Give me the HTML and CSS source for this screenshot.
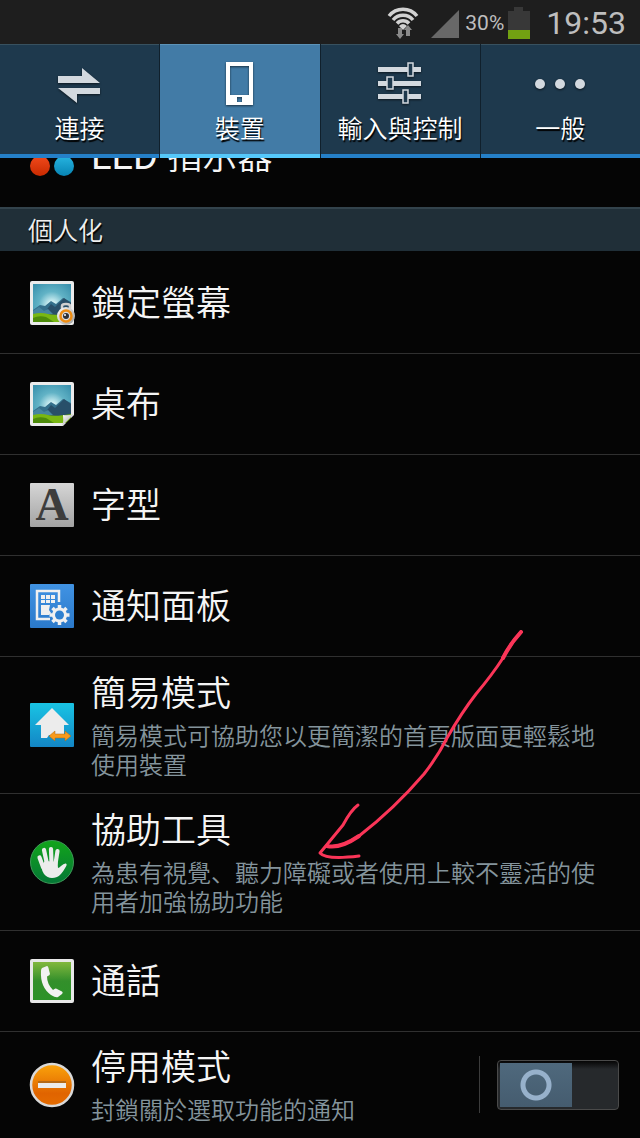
FILE: index.html
```html
<!DOCTYPE html>
<html lang="zh">
<head>
    <title>設定</title>
    <meta charset="UTF-8">
    <meta name="viewport" content="width=device-width, initial-scale=1">
    <link rel="stylesheet" href="styles.css">
</head>
<body>
    <header class="status-bar">
        <svg class="wifi" width="32" height="34" viewBox="0 0 32 34" aria-hidden="true">
            <g fill="none" stroke="#d2d2d2" stroke-width="3.500">
                <path d="M2 10A18 18 0 0 1 30 10"/>
                <path d="M6 14A13 13 0 0 1 26 14"/>
                <path d="M10 17.500A8 8 0 0 1 22 17.500"/>
            </g>
            <path d="M12 20Q16 16 20 20L16 24z" fill="#d2d2d2"/>
            <path d="M11 22h4v6h2l-4 5-4-5h2z" fill="#8a8a8a"/>
            <path d="M19 30h4v-6h2l-4-5-4 5h2z" fill="#8a8a8a"/>
        </svg>
        <svg class="signal" width="28" height="28" viewBox="0 0 28 28" aria-hidden="true">
            <path d="M28 0v28H0z" fill="#686868"/>
        </svg>
        <span class="percent">30%</span>
        <svg class="battery" width="22" height="32" viewBox="0 0 22 32" aria-hidden="true">
            <path d="M6 0h9v4h7v28H0V4h6z" fill="#383838"/>
            <path d="M0 23h22v9H0z" fill="#72a112"/>
        </svg>
        <span class="clock">19:53</span>
    </header>

    <nav class="tabs" role="tablist">
        <button class="tab" role="tab" aria-selected="false">
            <svg width="48" height="48" viewBox="0 0 48 48" aria-hidden="true">
                <path d="M2 16h24V8l18 15H2z" fill="#d3d9df"/>
                <path d="M44 34H21v9L2 28h42z" fill="#d3d9df"/>
            </svg>
            <span>連接</span>
        </button>
        <button class="tab active" role="tab" aria-selected="true">
            <svg width="48" height="48" viewBox="0 0 48 48" aria-hidden="true">
                <path fill-rule="evenodd" d="M10 2h27v43H10zM14 6v29h19V6zM21 37v5h5v-5z" fill="#fff"/>
            </svg>
            <span>裝置</span>
        </button>
        <button class="tab" role="tab" aria-selected="false">
            <svg width="48" height="48" viewBox="0 0 48 48" aria-hidden="true">
                <path d="M2 7h43v5H2zM2 21h43v5H2zM2 34h43v5H2z" fill="#d3d9df"/>
                <g fill="#1e394d" stroke="#d3d9df" stroke-width="1.500">
                    <path d="M32 3h5v13h-5zM11 17h6v12h-6zM27 30h5v13h-5z"/>
                </g>
            </svg>
            <span>輸入與控制</span>
        </button>
        <button class="tab" role="tab" aria-selected="false">
            <svg class="dots" width="52" height="48" viewBox="0 0 52 48" aria-hidden="true">
                <g fill="#d3d9df">
                    <circle cx="6" cy="24" r="5"/>
                    <circle cx="26" cy="24" r="5"/>
                    <circle cx="46" cy="24" r="5"/>
                </g>
            </svg>
            <span>一般</span>
        </button>
    </nav>

    <main class="list">
        <a class="row scrolled" href="#led">
            <svg class="icon" viewBox="0 0 44 44" aria-hidden="true">
                <defs>
                    <linearGradient id="red" x1="0" y1="0" x2="0" y2="1"><stop offset="0" stop-color="#f04a1c"/><stop offset="1" stop-color="#c92a00"/></linearGradient>
                    <linearGradient id="blue" x1="0" y1="0" x2="0" y2="1"><stop offset="0" stop-color="#27b4e0"/><stop offset="1" stop-color="#0784b4"/></linearGradient>
                </defs>
                <circle cx="10" cy="31" r="10" fill="url(#red)"/>
                <circle cx="34" cy="31" r="10" fill="url(#blue)"/>
            </svg>
            <span class="title"><span class="latin">LED </span>指示器</span>
        </a>

        <h2 class="section">個人化</h2>

        <a class="row" href="#lock">
            <svg class="icon" viewBox="0 0 44 44" aria-hidden="true">
                <defs>
                    <radialGradient id="sky" cx=".5" cy=".55" r=".7"><stop offset="0" stop-color="#fff"/><stop offset=".15" stop-color="#c9ecf0"/><stop offset=".5" stop-color="#62b3c6"/><stop offset="1" stop-color="#3a91ad"/></radialGradient>
                    <linearGradient id="metal" x1="0" y1="0" x2="1" y2="1"><stop offset="0" stop-color="#fff"/><stop offset="1" stop-color="#9a9a9a"/></linearGradient>
                    <g id="landscape">
                        <rect width="44" height="44" rx="2" fill="#ececec"/>
                        <path d="M3 3h38v38H3z" fill="url(#sky)"/>
                        <path d="M3 29l7-5 5 1 6-5 5 3 7-6 8 4v14H3z" fill="#34708c"/>
                        <path d="M15 31l6-8 4 3 9-9 7 5v12H15z" fill="#284f69"/>
                        <path d="M3 30l6-4 5 4 4-2 5 5H3z" fill="#4785a0"/>
                        <path d="M3 33q8-2 15 0t23-1v9H3z" fill="#79b713"/>
                        <path d="M3 37q6-3 13-1l8 5H3z" fill="#4d8b0b"/>
                    </g>
                </defs>
                <use href="#landscape"/>
                <path d="M32 29v-4q0-2 4-2t4 2v4" fill="none" stroke="#d0d0d0" stroke-width="2.500"/>
                <circle cx="36" cy="35" r="9" fill="url(#metal)"/>
                <circle cx="36" cy="35" r="5.500" fill="#ddd" stroke="#ee8d13" stroke-width="2.500"/>
                <circle cx="36" cy="35" r="3" fill="#303238"/>
                <circle cx="35" cy="34" r="1" fill="#fff"/>
            </svg>
            <span class="title">鎖定螢幕</span>
        </a>

        <a class="row" href="#wallpaper">
            <svg class="icon" viewBox="0 0 44 44" aria-hidden="true">
                <use href="#landscape"/>
                <path d="M32 45l13-13v13z" fill="#050505"/>
                <path d="M32 44q2-5 1-11 5 1 11-1z" fill="url(#metal)"/>
            </svg>
            <span class="title">桌布</span>
        </a>

        <a class="row" href="#font">
            <span class="icon font-icon" aria-hidden="true">A</span>
            <span class="title">字型</span>
        </a>

        <a class="row" href="#panel">
            <svg class="icon" viewBox="0 0 44 44" aria-hidden="true">
                <defs><linearGradient id="panel" x1="0" y1="0" x2="0" y2="1"><stop offset="0" stop-color="#4193e3"/><stop offset="1" stop-color="#2b79ca"/></linearGradient></defs>
                <rect width="44" height="44" rx="1" fill="url(#panel)"/>
                <path d="M29 18V7H7v28h13" fill="none" stroke="#f0f0f0" stroke-width="2.500"/>
                <path d="M11 11h4v4h-4zM16 11h4v4h-4zM21 11h4v4h-4zM11 16h4v3h-4zM16 16h4v3h-4zM21 16h4v3h-4zM11 21h9l-1 5 2 3-2 2h-8z" fill="#f0f0f0"/>
                <g stroke="#f0f0f0" stroke-width="3.500">
                    <path d="M29.500 21v20M19.500 31h20M22.500 24l14 14M36.500 24l-14 14"/>
                </g>
                <circle cx="29.500" cy="31" r="7.500" fill="#f0f0f0"/>
                <circle cx="29.500" cy="31" r="4.500" fill="#2f80d0"/>
            </svg>
            <span class="title">通知面板</span>
        </a>

        <a class="row" href="#easy">
            <svg class="icon" viewBox="0 0 44 44" aria-hidden="true">
                <defs><linearGradient id="easy" x1="0" y1="0" x2="0" y2="1"><stop offset="0" stop-color="#19c4e4"/><stop offset="1" stop-color="#1386c5"/></linearGradient></defs>
                <rect width="44" height="44" rx="1" fill="url(#easy)"/>
                <path d="M22 5l17 17h-5v10H19l-2 3h-6V22H5z" fill="#ececec"/>
                <path d="M19 33l6-5v3h10v-3l6 5-6 5v-3H25v3z" fill="#f89a1c" stroke="#a9691d" stroke-width=".5"/>
            </svg>
            <span class="text">
                <span class="title">簡易模式</span>
                <span class="desc">簡易模式可協助您以更簡潔的首頁版面更輕鬆地使用裝置</span>
            </span>
        </a>

        <a class="row" href="#accessibility">
            <svg class="icon" viewBox="0 0 44 44" aria-hidden="true">
                <defs><linearGradient id="hand" x1="0" y1="0" x2="0" y2="1"><stop offset="0" stop-color="#12a51b"/><stop offset="1" stop-color="#047736"/></linearGradient></defs>
                <circle cx="22" cy="22" r="21.500" fill="url(#hand)" stroke="#3e9a58"/>
                <g fill="none" stroke="#ececec" stroke-width="4.200" stroke-linecap="round">
                    <path d="M13 27L9.500 17.500M17 24l-3-14M21.500 23L21 9M25.500 24l2-13"/>
                </g>
                <path d="M11 26L15 21l12.500 1 .5 6q1 0 3-2 3-3 5-2.500 1.500 1 0 3-5 9-9 10.500-8 3-13-3-2-3-3-8z" fill="#ececec"/>
            </svg>
            <span class="text">
                <span class="title">協助工具</span>
                <span class="desc">為患有視覺、聽力障礙或者使用上較不靈活的使用者加強協助功能</span>
            </span>
        </a>

        <a class="row" href="#call">
            <svg class="icon" viewBox="0 0 44 44" aria-hidden="true">
                <defs><linearGradient id="call" x1="0" y1="0" x2="0" y2="1"><stop offset="0" stop-color="#82b83e"/><stop offset=".5" stop-color="#338f2b"/><stop offset="1" stop-color="#2c9228"/></linearGradient></defs>
                <rect width="44" height="44" rx="2" fill="#e8e8e8"/>
                <path d="M3 3h38v38H3z" fill="url(#call)"/>
                <path d="M12 9l5-2q1 0 1.500 2l1.500 6q0 1-3 2.500Q17 25 23 31q2-2 3-1.500l6 3q1.500 1 0 2.500l-4 3q-2 1-7-2Q10 28 11 12q0-2 1-3z" fill="#f2f2f2"/>
            </svg>
            <span class="title">通話</span>
        </a>

        <div class="row last">
            <svg class="icon" viewBox="0 0 44 44" aria-hidden="true">
                <defs><linearGradient id="block" x1="0" y1="0" x2="0" y2="1"><stop offset="0" stop-color="#fba40b"/><stop offset=".7" stop-color="#e06400"/><stop offset="1" stop-color="#e56c00"/></linearGradient></defs>
                <circle cx="22" cy="22" r="21" fill="url(#block)" stroke="#d9d9d9" stroke-width="2.500"/>
                <path d="M8 18h28v3H8z" fill="#b56a18"/>
                <path d="M8 20h28v5H8z" fill="#ececec"/>
            </svg>
            <label class="text" for="blocking">
                <span class="title">停用模式</span>
                <span class="desc">封鎖關於選取功能的通知</span>
            </label>
            <span class="divider"></span>
            <input class="switch" type="checkbox" role="switch" id="blocking">
        </div>
    </main>

    <!-- hand-drawn arrow pointing at the accessibility entry -->
    <svg class="arrow" width="208" height="232" viewBox="0 0 208 232" aria-hidden="true">
        <g fill="none" stroke="#fb3558" stroke-width="3" stroke-linecap="round" stroke-linejoin="round">
            <path d="M203 2Q192 14 185 28Q174 45 158 64Q144 82 129 108Q120 126 106 144Q76 179 41 206Q22 219 9 216"/>
            <path d="M40 175Q33 180 25 195L2 223Q8 230 41 226"/>
            <path d="M203 2Q192 14 185 28" stroke-width="4"/>
            <path d="M41 206Q22 219 9 216" stroke-width="4"/>
        </g>
    </svg>
</body>
</html>
```

FILE: styles.css
```css
* { box-sizing: border-box; }
body {
    position: relative;
    display: flex;
    flex-direction: column;
    height: 100vh;
    margin: 0;
    overflow: hidden;
    background: #050505;
    color: #f5f5f5;
    font-family: "Noto Sans CJK SC", sans-serif;
    font-weight: 350;
}

/* status bar */
.status-bar {
    display: flex;
    flex: none;
    align-items: center;
    justify-content: flex-end;
    height: 44px;
    padding: 2px 14px 0 0;
    background: #1e1e1e;
    color: #bebebe;
    font-family: Roboto, sans-serif;
    font-weight: 400;
}
.signal { margin: 2px 6px 0 12px; }
.percent { font-size: 21px; }
.battery { margin: 0 16px 0 4px; }
.clock { font-size: 32px; }

/* tabs */
.tabs {
    display: grid;
    flex: none;
    grid-template-columns: repeat(4, 1fr);
    gap: 1px;
    background: #10202c;
}
.tab {
    display: flex;
    flex-direction: column;
    align-items: center;
    height: 114px;
    padding: 15px 0 0;
    border: 0;
    border-top: 1px solid #38515f;
    border-bottom: 4px solid #2580c8;
    background: #1e394d;
    color: #fff;
    font: inherit;
    font-size: 25px;
    line-height: 38px;
    text-shadow: 1px 2px 1px #000;
}
.tab svg { flex: none; filter: drop-shadow(0 1px 1px rgba(0,0,0,0.6)); }
.tab.active { background: #427ba6; border-top-color: #5c93b8; border-bottom-color: #55c8fa; }

/* settings list */
.list { flex: 1; min-height: 0; overflow: hidden; }
.row {
    display: flex;
    align-items: center;
    gap: 17px;
    min-height: 101px;
    padding: 11px 40px 11px 30px;
    border-bottom: 1px solid #303030;
    color: inherit;
    text-decoration: none;
}
.row.scrolled { margin-top: -52px; border-bottom: 0; }
.row.last { padding: 10px 21px 10px 30px; border-bottom: 0; }
.section {
    height: 44px;
    margin: 0 0 2px;
    padding: 0 28px;
    border-top: 2px solid #33434c;
    background: #202f38;
    color: #eee;
    font-size: 25px;
    line-height: 40px;
    font-weight: inherit;
    text-shadow: 1px 2px 1px #000;
}
.icon { flex: none; width: 44px; height: 44px; overflow: visible; }
.font-icon {
    border-radius: 1px;
    background: linear-gradient(#d6d6d6, #a3a3a3);
    color: #3d3d3d;
    font-family: "Liberation Serif", serif;
    font-size: 46px;
    font-weight: 700;
    line-height: 44px;
    text-align: center;
}
.text { display: flex; flex: 1; flex-direction: column; gap: 6px; }
.text, .row > .title { padding-bottom: 4px; }
.title { font-size: 35px; line-height: 46px; }
.latin { font-family: Roboto, sans-serif; font-size: 38px; font-weight: 400; }
.desc { color: #84949c; font-size: 24px; line-height: 29px; }
.divider { width: 1px; height: 57px; background: #3c3c3c; }
.switch {
    flex: none;
    width: 122px;
    height: 50px;
    margin: 0;
    border: 1px solid #4a4a4a;
    border-radius: 4px;
    appearance: none;
    background:
        radial-gradient(circle at 38px 24px, transparent 10px, #97b1cb 11px, #97b1cb 15px, transparent 16px) no-repeat,
        linear-gradient(#4f697d, #455c6f) 2px 2px / 72px 44px no-repeat,
        linear-gradient(#050505, #26292c 8px);
}

.arrow { position: absolute; top: 630px; left: 318px; pointer-events: none; }
```
